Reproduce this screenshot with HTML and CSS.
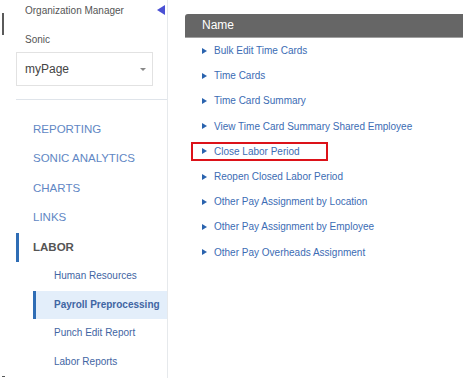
FILE: index.html
```html
<!DOCTYPE html>
<html lang="en">

<head>
    <meta charset="UTF-8">
    <meta name="viewport" content="width=device-width, initial-scale=1.0">
    <title>Labor - Payroll Preprocessing</title>

    <link rel="stylesheet" href="styles.css">
</head>

<body>

<div class="sidebar">
    <div class="org-row">
        <span class="org-title">Organization Manager</span>
        <span class="collapse"></span>
    </div>

    <div class="site-label">Sonic</div>
    <div class="page-select">
        <span>myPage</span>
        <span class="caret"></span>
    </div>

    <div class="divider"></div>

    <ul class="nav">
        <li>REPORTING</li>
        <li>SONIC ANALYTICS</li>
        <li>CHARTS</li>
        <li>LINKS</li>
        <li class="open">LABOR</li>
    </ul>

    <ul class="subnav">
        <li>Human Resources</li>
        <li class="active">Payroll Preprocessing</li>
        <li>Punch Edit Report</li>
        <li>Labor Reports</li>
    </ul>
</div>

<div class="main">
    <div class="list-head">Name</div>
    <ul class="reports">
        <li><span class="row"><span class="arrow"></span>Bulk Edit Time Cards</span></li>
        <li><span class="row"><span class="arrow"></span>Time Cards</span></li>
        <li><span class="row"><span class="arrow"></span>Time Card Summary</span></li>
        <li><span class="row"><span class="arrow"></span>View Time Card Summary Shared Employee</span></li>
        <li><span class="row marked"><span class="arrow"></span>Close Labor Period</span></li>
        <li><span class="row"><span class="arrow"></span>Reopen Closed Labor Period</span></li>
        <li><span class="row"><span class="arrow"></span>Other Pay Assignment by Location</span></li>
        <li><span class="row"><span class="arrow"></span>Other Pay Assignment by Employee</span></li>
        <li><span class="row"><span class="arrow"></span>Other Pay Overheads Assignment</span></li>
    </ul>
</div>

</body>
</html>
```

FILE: styles.css
```css
body {
    font-family: 'Liberation Sans', Arial, sans-serif;
    background: #ffffff;
    margin: 0;
    display: flex;
    height: 378px;
    overflow: hidden;
}

ul {
    list-style: none;
    margin: 0;
    padding: 0;
}

/* left menu */
.sidebar {
    position: relative;
    width: 167px;
    flex-shrink: 0;
    border-right: 1px solid #e6e9ec;
}

.sidebar::before {
    content: "";
    position: absolute;
    left: 2px;
    top: 13px;
    width: 2px;
    height: 22px;
    background: #5a5a5a;
}

.sidebar::after {
    content: "";
    position: absolute;
    left: 2px;
    bottom: 1px;
    width: 3px;
    height: 1px;
    background: #555;
}

.org-row {
    display: flex;
    justify-content: space-between;
    align-items: center;
    padding: 4px 2px 0 25px;
    height: 12px;
    font-size: 10px;
    color: #555;
}

.collapse {
    width: 0;
    height: 0;
    border-top: 5px solid transparent;
    border-bottom: 5px solid transparent;
    border-right: 8px solid #4a50d4;
}

.site-label {
    margin: 18px 0 0 25px;
    font-size: 10px;
    line-height: 12px;
    color: #555;
}

.page-select {
    display: flex;
    justify-content: space-between;
    align-items: center;
    box-sizing: border-box;
    margin: 6px 0 0 16px;
    width: 137px;
    height: 34px;
    padding: 0 6px 0 8px;
    border: 1px solid #e2e2e2;
    font-size: 12px;
    color: #444;
}

.caret {
    width: 0;
    height: 0;
    border-left: 3px solid transparent;
    border-right: 3px solid transparent;
    border-top: 3px solid #888;
}

.divider {
    margin: 13px 0 0 16px;
    height: 1px;
    background: #dfe4ea;
}

.nav {
    margin-top: 14.5px;
}

.nav li {
    height: 29.5px;
    line-height: 29.5px;
    padding-left: 33px;
    font-size: 11.5px;
    color: #6187c4;
}

.nav li.open {
    margin-left: 16px;
    padding-left: 14px;
    border-left: 3px solid #2f6db5;
    color: #555;
    font-weight: bold;
}

.subnav li {
    height: 28.5px;
    line-height: 28.5px;
    padding-left: 54px;
    font-size: 10px;
    color: #3f65a3;
}

.subnav li.active {
    margin-left: 33px;
    padding-left: 18px;
    border-left: 3px solid #2f6db5;
    background: #e3eefa;
    font-weight: bold;
}

/* report list */
.main {
    flex: 1;
    padding-top: 14px;
    margin-left: 17px;
}

.list-head {
    height: 23px;
    line-height: 23px;
    padding-left: 17px;
    background: #666666;
    border-bottom: 1px solid #a0a0a0;
    border-top-left-radius: 3px;
    color: #ffffff;
    font-size: 12px;
}

.reports li {
    height: 25.2px;
    display: flex;
    align-items: center;
    padding-left: 6px;
}

.row {
    display: flex;
    align-items: center;
    box-sizing: border-box;
    height: 19px;
    padding-left: 9px;
    border: 2px solid transparent;
    font-size: 10px;
    color: #3b6cb4;
    white-space: nowrap;
}

.row.marked {
    width: 137px;
    border-color: #dc1219;
}

.arrow {
    width: 0;
    height: 0;
    margin-right: 7px;
    border-top: 3.5px solid transparent;
    border-bottom: 3.5px solid transparent;
    border-left: 5px solid #2a63ae;
}
```
